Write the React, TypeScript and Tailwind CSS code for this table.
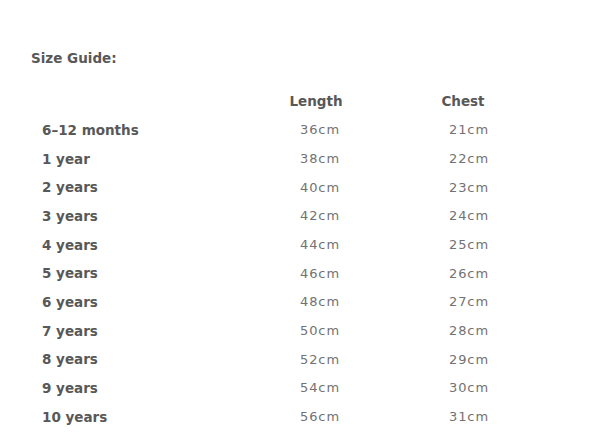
import React from "react";

const rows: [string, string, string][] = [
  ["6–12 months", "36cm", "21cm"],
  ["1 year", "38cm", "22cm"],
  ["2 years", "40cm", "23cm"],
  ["3 years", "42cm", "24cm"],
  ["4 years", "44cm", "25cm"],
  ["5 years", "46cm", "26cm"],
  ["6 years", "48cm", "27cm"],
  ["7 years", "50cm", "28cm"],
  ["8 years", "52cm", "29cm"],
  ["9 years", "54cm", "30cm"],
  ["10 years", "56cm", "31cm"],
];

export default function App() {
  return (
    <div className="w-[594px] h-[444px] bg-white overflow-hidden pl-[31px] pt-[48px] font-['DejaVu_Sans',sans-serif] text-[#585858]">
      <div className="text-[13.5px] leading-[20px] font-bold">Size Guide:</div>
      <div className="mt-[19px] grid grid-cols-[214px_146px_150px] auto-rows-[28.7px] items-center">
        <div />
        <div className="text-center font-bold text-[13.5px] pr-[4px]">Length</div>
        <div className="text-center font-bold text-[13.5px] pr-[6px]">Chest</div>
        {rows.map(([a, b, c]) => (
          <React.Fragment key={a}>
            <div className="pl-[11px] font-bold text-[13.5px]">{a}</div>
            <div className="text-center text-[13px] tracking-[0.07em] text-[#727272] pl-[4px]">{b}</div>
            <div className="text-center text-[13px] tracking-[0.07em] text-[#727272] pl-[6px]">{c}</div>
          </React.Fragment>
        ))}
      </div>
    </div>
  );
}
